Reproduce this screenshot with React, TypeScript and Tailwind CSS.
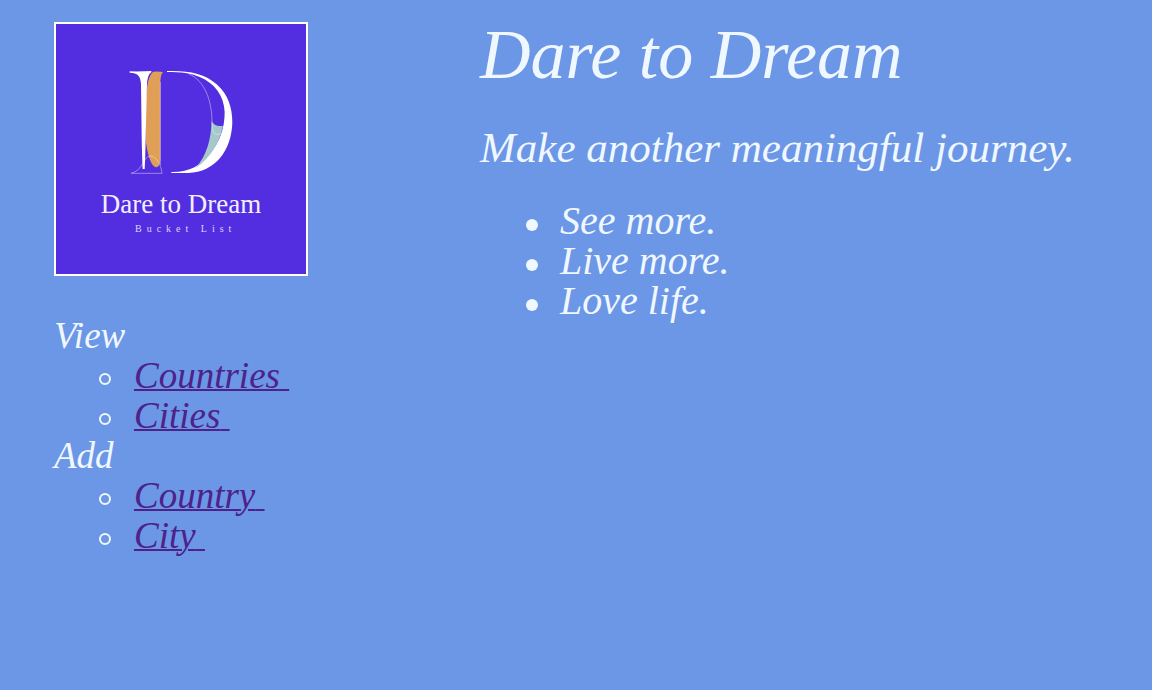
import React from "react";

const navGroups = [
  { title: "View", links: ["Countries", "Cities"] },
  { title: "Add", links: ["Country", "City"] },
];

const goals = ["See more.", "Live more.", "Love life."];

function Logo() {
  return (
    <svg
      viewBox="0 0 250 250"
      role="img"
      aria-label="Dare to Dream Bucket List"
      className="block w-full bg-[#522ee0]"
    >
      <g transform="translate(64 36) scale(0.33333)">
        <path
          d="M100 35 Q115 33 129 36 C123 43 121 55 121 78 L121 285 C122 308 118 321 109 322 C94 322 84 288 78 250 C75 195 76 130 80 92 C83 62 90 42 100 35 Z"
          fill="#df9f56"
        />
        <path
          d="M29 34 Q60 35 94 33 L94 37 C86 42 83 52 81 72 L77 230 Q76 290 74 327 L68 327 Q66 290 65 230 L63 72 C61 47 54 39 29 38 Z"
          fill="#fff"
        />
        <path
          d="M141 33 C205 31 254 40 290 73 C325 104 337 145 337 187 C335 272 285 337 205 339 L154 339 L154 336 C209 337 242 316 270 281 C300 244 314 205 314 156 C312 106 283 69 239 51 C213 39 184 36 141 36 Z"
          fill="#fff"
        />
        <path
          d="M275 183 Q282 198 300 198 L309 198 C299 244 275 291 226 325 C260 288 273 239 275 183 Z"
          fill="#a5c8ca"
        />
        <g fill="none" stroke="#fff" strokeWidth="2.5" opacity="0.5">
          <path d="M207 42 C253 62 275 119 276 183 C277 211 280 223 291 223 Q301 224 307 219" />
          <path d="M33 340 H126 C124 317 109 287 91 288 C69 289 70 332 33 340 Z" />
          <path d="M121 66 V315" />
        </g>
      </g>
      <text
        x="125"
        y="189"
        textAnchor="middle"
        fill="#f3eeff"
        className="font-['Liberation_Serif',serif] text-[27px]"
      >
        Dare to Dream
      </text>
      <text
        x="79"
        y="208"
        fill="#ddd5fb"
        className="font-['Liberation_Serif',serif] text-[10px] tracking-[5px]"
      >
        Bucket List
      </text>
    </svg>
  );
}

export default function App() {
  return (
    <div className="flex min-h-screen bg-[#6c96e6] pt-[22px] font-['Liberation_Serif',serif] text-[40px] leading-10 text-[#f0f8ff] italic">
      <aside className="w-5/12 shrink-0 pl-[54px]">
        <div className="w-[254px] border-2 border-white not-italic">
          <Logo />
        </div>
        <nav className="mt-10 text-[37px]">
          {navGroups.map((group) => (
            <section key={group.title}>
              <h2>{group.title}</h2>
              <ul className="pl-[45px]">
                {group.links.map((label) => (
                  <li key={label} className="flex items-center gap-[23px]">
                    <span
                      aria-hidden="true"
                      className="mt-1.5 size-3 rounded-full border-2 border-[#f0f8ff]"
                    />
                    <a href="#" className="text-[#4d2289] underline decoration-2">
                      {label}&nbsp;
                    </a>
                  </li>
                ))}
              </ul>
            </section>
          ))}
        </nav>
      </aside>
      <main className="min-w-0 flex-1">
        <h1 className="text-[70px] leading-[66px]">Dare to Dream</h1>
        <p className="mt-10 text-[43px] leading-10">Make another meaningful journey.</p>
        <ul className="mt-[33px] pl-[46px]">
          {goals.map((goal) => (
            <li key={goal} className="flex items-center gap-[22px]">
              <span aria-hidden="true" className="mt-2 size-3 rounded-full bg-[#f0f8ff]" />
              <span>{goal}</span>
            </li>
          ))}
        </ul>
      </main>
    </div>
  );
}
